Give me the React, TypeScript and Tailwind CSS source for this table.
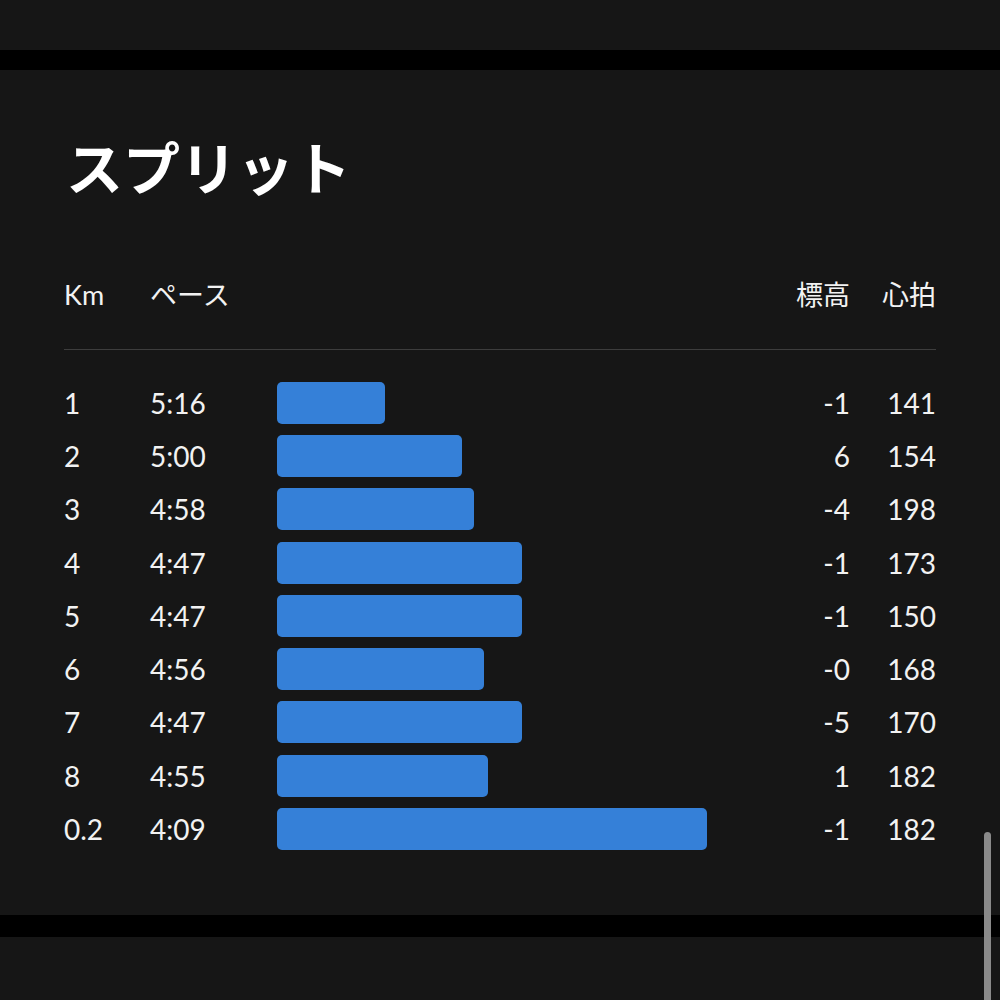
import React from 'react'

const splits = [
    { km: '1', pace: '5:16', bar: 108, elev: '-1', hr: '141' },
    { km: '2', pace: '5:00', bar: 185, elev: '6', hr: '154' },
    { km: '3', pace: '4:58', bar: 197, elev: '-4', hr: '198' },
    { km: '4', pace: '4:47', bar: 245, elev: '-1', hr: '173' },
    { km: '5', pace: '4:47', bar: 245, elev: '-1', hr: '150' },
    { km: '6', pace: '4:56', bar: 207, elev: '-0', hr: '168' },
    { km: '7', pace: '4:47', bar: 245, elev: '-5', hr: '170' },
    { km: '8', pace: '4:55', bar: 211, elev: '1', hr: '182' },
    { km: '0.2', pace: '4:09', bar: 430, elev: '-1', hr: '182' },
]

const font = { fontFamily: 'Lato, "Noto Sans CJK JP", sans-serif' }

function SplitRow({ s }: { s: typeof splits[number] }) {
    return (
        <div className='flex items-center h-[53.3px] text-[28px] text-[#f2f2f2]'>
            <div className='w-[86px]'>{s.km}</div>
            <div className='w-[127px]'>{s.pace}</div>
            <div className='flex-1 flex items-center'>
                {/* bar width comes from data */}
                <div className='h-[42px] rounded-[5px] bg-[#3580d8]' style={{ width: s.bar }} />
            </div>
            <div className='w-[80px] text-right'>{s.elev}</div>
            <div className='w-[86px] text-right'>{s.hr}</div>
        </div>
    )
}

export default function App() {
    return (
        <div className='relative w-[1000px] h-[1000px] bg-black overflow-hidden' style={font}>
            <div className='h-[50px] bg-[#161616]' />
            <div className='h-[20px] bg-black' />
            <section className='h-[845px] bg-[#161616] px-16'>
                <h1 className='pt-[62px] text-[57px] leading-[72px] font-bold text-white pl-[2px]'>
                    スプリット
                </h1>
                <div className='mt-[66px] flex items-center h-[50px] text-[27px] text-[#f2f2f2]'>
                    <div className='w-[86px]'>Km</div>
                    <div className='flex-1'>ペース</div>
                    <div className='w-[80px] text-right'>標高</div>
                    <div className='w-[86px] text-right'>心拍</div>
                </div>
                <div className='mt-[29px] h-px bg-[#3d3d3d]' />
                <div className='mt-[26px]'>
                    {splits.map((s, i) => <SplitRow key={i} s={s} />)}
                </div>
            </section>
            <div className='h-[22px] bg-black' />
            <div className='h-[63px] bg-[#161616]' />
            <div className='absolute left-[984px] top-[832px] w-[7px] h-[200px] rounded-full bg-[#8a8a8a]' />
        </div>
    )
}
